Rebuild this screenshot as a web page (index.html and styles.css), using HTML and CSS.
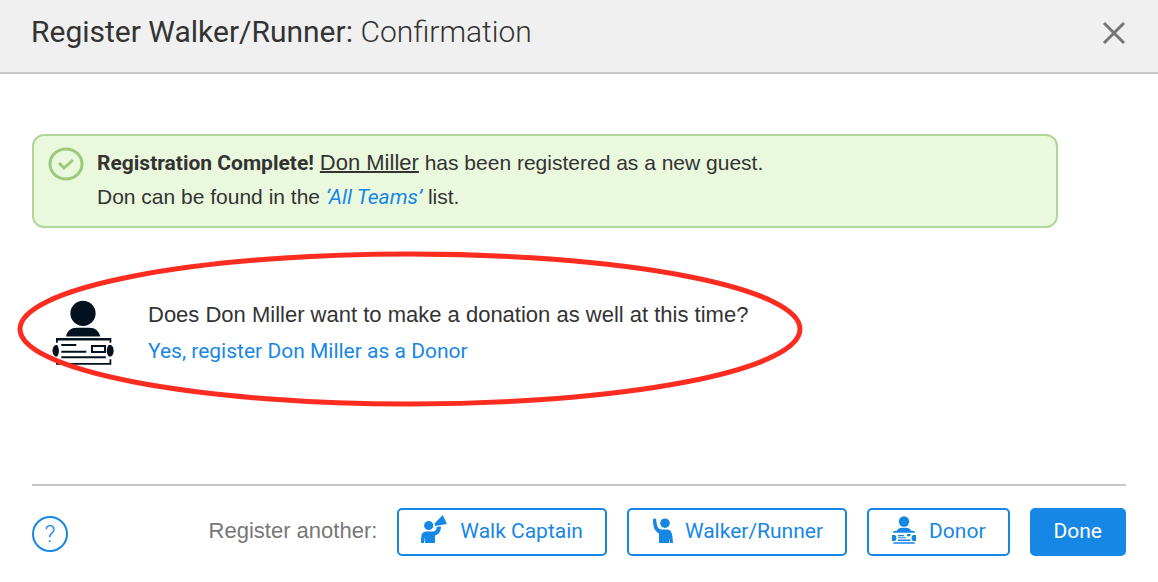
FILE: index.html
```html
<!DOCTYPE html>
<html lang="en">

<head>
    <meta charset="UTF-8">
    <meta name="viewport" content="width=device-width, initial-scale=1.0">
    <title>Register Walker/Runner: Confirmation</title>
    <link rel="stylesheet" href="styles.css">
</head>

<body>
    <header class="dialog-header">
        <h1>Register Walker/Runner: <span>Confirmation</span></h1>
        <button type="button" class="close-btn" aria-label="Close">
            <svg viewBox="0 0 24 24"><path d="M2 2l20 20M22 2L2 22" /></svg>
        </button>
    </header>

    <main class="dialog-body">
        <div class="alert">
            <svg class="alert-icon" viewBox="0 0 36 34" aria-hidden="true">
                <ellipse cx="18" cy="17" rx="16" ry="15" />
                <path d="M11 16l5 5 9-8" />
            </svg>
            <div class="alert-text">
                <p><strong>Registration Complete!</strong> <a href="#" class="guest-link">Don Miller</a> has been registered as a new guest.</p>
                <p>Don can be found in the <a href="#" class="list-link">‘All Teams’</a> list.</p>
            </div>
        </div>

        <section class="donation">
            <svg class="donation-icon" viewBox="0 0 64 66" aria-hidden="true">
                <circle cx="31" cy="13.400" r="12.600" />
                <path d="M14 36.500c1.200-6 5-8.800 10.500-8.800h13c5.500 0 9.300 2.800 10.800 8.800z" />
                <path d="M4 38h55.300v4.700h-1.800v-2.200H5.800v2.200H4zM4 59.300v5.500h55.300v-5.500h-1.800V63H5.800v-3.700z" />
                <path d="M3.500 45h1.500c2.500 2.500 2.500 9 0 11.500H3.500c-4-2-4-9.500 0-11.500zM59 45h-2c-3 2.500-3 9 0 11.500h2c3.500-2 3.500-9.500 0-11.500z" />
                <path d="M9.300 44h15v2h-15zM9.300 50.700h25v2h-25zM9.300 56.300h44.500v2H9.300z" />
                <path fill-rule="evenodd" d="M39 45h15v8H39zm2 2v4h11v-4z" />
            </svg>
            <div class="donation-text">
                <p>Does Don Miller want to make a donation as well at this time?</p>
                <a href="#">Yes, register Don Miller as a Donor</a>
            </div>
            <svg class="highlight" viewBox="0 0 786 156" aria-hidden="true">
                <ellipse cx="393" cy="78" rx="390" ry="75" />
            </svg>
        </section>
    </main>

    <footer class="dialog-footer">
        <button type="button" class="help-btn" aria-label="Help">?</button>
        <div class="actions">
            <span class="actions-label">Register another:</span>
            <button type="button" class="btn">
                <svg class="captain" viewBox="0 0 27 28" aria-hidden="true">
                    <circle cx="7.700" cy="10.500" r="4.600" />
                    <path d="M13.500 8.600L21.700 0 26 9l-12 2z" />
                    <path d="M0 28c0-8 .5-11.500 5.500-11.500H12c2 0 3.500-1.500 3.800-4.500l4-.8c.3 4.500-1.300 7.800-5.800 9.300V28H4v-6L3 28z" />
                </svg>
                Walk Captain
            </button>
            <button type="button" class="btn">
                <svg class="walker" viewBox="0 0 22 26" aria-hidden="true">
                    <circle cx="14" cy="5.200" r="4.800" />
                    <path d="M2 1.500C2 .3 5 0 5.200 1c.3 5 .8 9.500 5 10.500h6c3.800 0 5.300 3 5.800 13.500h-3l-.8-5v5H8v-9.500C3.500 13 2 9 2 1.500z" />
                </svg>
                Walker/Runner
            </button>
            <button type="button" class="btn">
                <svg class="donor" viewBox="0 0 26 28" aria-hidden="true">
                    <circle cx="13" cy="5.500" r="5.200" />
                    <path d="M5 15.500c1.500-2.500 3.500-3.800 6-3.800h4c2.500 0 4.500 1.300 6 3.800z" />
                    <path d="M2.300 15h21.400v1.700H2.300zM2.300 26.200h21.400v1.500H2.300z" />
                    <path d="M1 19h3c2 1.500 2 4.500 0 6H1zM25 19h-3c-2 1.500-2 4.500 0 6h3z" />
                    <path d="M7 19h6v1.200H7zM7 21.300h8v1H7zM7 23.600h12.500v1.400H7zM16 18h3.500v2.200H16z" />
                </svg>
                Donor
            </button>
            <button type="button" class="btn btn-primary">Done</button>
        </div>
    </footer>
</body>

</html>
```

FILE: styles.css
```css
* {
    box-sizing: border-box;
    margin: 0;
    padding: 0;
}

body {
    display: flex;
    flex-direction: column;
    min-height: 100vh;
    font-family: "Liberation Sans", Arial, sans-serif;
    font-size: 21px;
    color: #333;
    background-color: #fff;
}

a {
    color: #1787e5;
    text-decoration: none;
}

button {
    font-family: Roboto, sans-serif;
    cursor: pointer;
}

/* Header */
.dialog-header {
    display: flex;
    justify-content: space-between;
    align-items: center;
    padding: 0 32px 8px 31px;
    height: 74px;
    background-color: #f0f0f0;
    border-bottom: 2px solid #c8c8c8;
}

h1 {
    padding-bottom: 2px;
    font-family: Roboto, sans-serif;
    font-size: 30px;
    font-weight: 400;
}

h1 span {
    font-weight: 300;
}

.close-btn {
    display: flex;
    padding-top: 2px;
    border: none;
    background: none;
}

.close-btn svg {
    width: 24px;
    height: 24px;
    fill: none;
    stroke: #757575;
    stroke-width: 3;
}

/* Body */
.dialog-body {
    padding: 60px 32px 0;
}

.alert {
    display: flex;
    gap: 13px;
    margin-right: 68px;
    padding: 10px 14px 12px;
    background-color: #eaf8de;
    border: 2px solid #b2d697;
    border-radius: 12px;
    line-height: 34px;
}

.alert-icon {
    flex: none;
    width: 36px;
    height: 34px;
    margin-top: 1px;
    fill: none;
    stroke: #9cca7b;
    stroke-width: 3;
}

.alert strong {
    font-family: Roboto, sans-serif;
}

.guest-link {
    font-size: 22px;
    color: #333;
    text-decoration: underline;
    text-decoration-thickness: 2px;
}

.list-link {
    font-family: Roboto, sans-serif;
    font-style: italic;
}

.donation {
    position: relative;
    display: flex;
    align-items: center;
    gap: 32px;
    margin-top: 69px;
    padding-left: 20px;
    line-height: 36px;
}

.donation-icon {
    width: 64px;
    height: 66px;
    fill: #03121f;
}

.donation-text p {
    font-size: 22px;
}

.donation-text a {
    font-family: Roboto, sans-serif;
}

/* red ring drawn over the donation question */
.highlight {
    position: absolute;
    top: -46px;
    left: -15px;
    width: 786px;
    height: 156px;
    fill: none;
    stroke: #fc2d20;
    stroke-width: 5;
    pointer-events: none;
}

/* Footer */
.dialog-footer {
    display: flex;
    justify-content: space-between;
    align-items: center;
    margin: auto 32px 0;
    padding: 22px 0 26px;
    border-top: 2px solid #c8c8c8;
}

.help-btn {
    width: 36px;
    height: 36px;
    margin-top: 4px;
    font-size: 24px;
    font-weight: 300;
    color: #1787e5;
    background: none;
    border: 2px solid #1787e5;
    border-radius: 50%;
}

.actions {
    display: flex;
    align-items: center;
    gap: 20px;
}

.actions-label {
    padding-bottom: 2px;
    font-size: 22px;
    color: #777;
}

.btn {
    display: flex;
    align-items: center;
    gap: 12px;
    height: 48px;
    padding: 0 22px 2px;
    font-size: 21px;
    color: #1787e5;
    background-color: #fff;
    border: 2px solid #1787e5;
    border-radius: 5px;
}

.btn svg {
    fill: currentColor;
}

.captain {
    width: 27px;
    height: 28px;
    margin-bottom: 4px;
}

.walker {
    width: 22px;
    height: 26px;
}

.donor {
    width: 26px;
    height: 28px;
    margin-bottom: 2px;
}

.btn-primary {
    color: #fff;
    background-color: #1787e5;
}
```
